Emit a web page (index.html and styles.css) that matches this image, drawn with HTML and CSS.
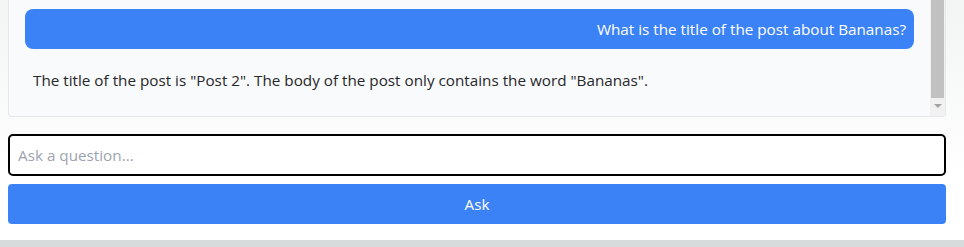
FILE: index.html
```html
<!DOCTYPE html>
<html lang="en">
<head>
    <meta charset="UTF-8">
    <meta name="viewport" content="width=device-width, initial-scale=1.0">
    <title>Ask the Posts</title>
    <link rel="stylesheet" href="styles.css">
</head>
<body>
    <div class="page">
        <div class="chat">
            <div class="messages">
                <div class="message user">What is the title of the post about Bananas?</div>
                <div class="message bot">The title of the post is "Post 2". The body of the post only contains the word "Bananas".</div>
            </div>
            <div class="scrollbar">
                <div class="thumb"></div>
                <div class="arrow"></div>
            </div>
        </div>

        <form class="ask-form" onsubmit="return false">
            <input type="text" class="question" placeholder="Ask a question..." autofocus>
            <button type="submit" class="ask-btn">Ask</button>
        </form>
    </div>
    <div class="footer-bar"></div>
</body>
</html>
```

FILE: styles.css
```css
html, body {
    margin: 0;
    padding: 0;
}
body {
    font-family: "Open Sans", "Noto Sans", sans-serif;
    font-size: 15.25px;
    color: #1f2937;
    background: linear-gradient(#f3f4f4, #ffffff 75%);
    height: 247px;
    display: flex;
    flex-direction: column;
}
.page {
    width: 938px;
    padding: 0 8px;
    flex: 1;
}
.chat {
    display: flex;
    background-color: #f9fafb;
    border: 1px solid #e5e7eb;
    border-top: none;
    border-radius: 0 0 4px 4px;
    height: 117px;
    box-sizing: border-box;
}
.messages {
    flex: 1;
    padding: 9px 16px 16px 16px;
    display: flex;
    flex-direction: column;
    gap: 11px;
}
.message {
    padding: 8px;
    line-height: 24px;
    border-radius: 8px;
}
.message.user {
    background-color: #3b82f6;
    color: #ffffff;
    text-align: right;
}
.message.bot {
    color: #27272a;
}
.scrollbar {
    width: 15px;
    background-color: #f1f1f1;
    display: flex;
    flex-direction: column;
    align-items: center;
}
.thumb {
    width: 13px;
    height: 98px;
    background-color: #c1c1c1;
}
.arrow {
    margin-top: 6px;
    width: 0;
    height: 0;
    border-left: 4px solid transparent;
    border-right: 4px solid transparent;
    border-top: 4px solid #a3a3a3;
}
.ask-form {
    margin-top: 17px;
    display: flex;
    flex-direction: column;
    gap: 8px;
}
.question {
    height: 42px;
    box-sizing: border-box;
    border: 2px solid #000000;
    border-radius: 5px;
    padding: 0 8px;
    font-family: inherit;
    font-size: 15.25px;
    color: #1f2937;
    background-color: #ffffff;
    outline: none;
}
.question::placeholder {
    color: #9ca3af;
}
.ask-btn {
    height: 40px;
    border: none;
    border-radius: 4px;
    background-color: #3b82f6;
    color: #ffffff;
    font-family: inherit;
    font-size: 15.25px;
    cursor: pointer;
}
.footer-bar {
    height: 7px;
    background-color: #d8dbdb;
}
```
